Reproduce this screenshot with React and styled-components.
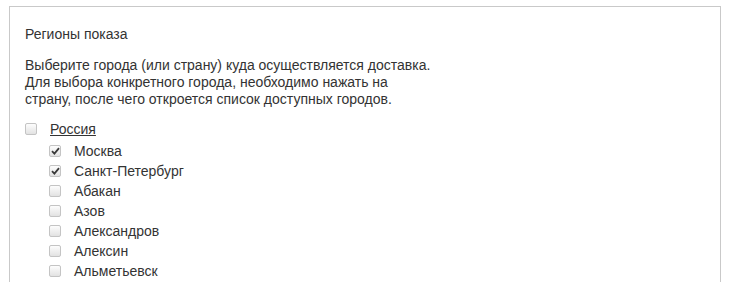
import React, { useState } from 'react';
import styled, { createGlobalStyle } from 'styled-components';

const GlobalStyle = createGlobalStyle`
  html, body {
    margin: 0;
    padding: 0;
    background: #fff;
  }
  body {
    font-family: "Liberation Sans", Arial, sans-serif;
    font-size: 14px;
    color: #333;
  }
`;

const Panel = styled.div`
  margin: 6px 0 0 9px;
  width: 712px;
  height: 290px;
  border: 1px solid #c9c9c9;
  border-bottom: none;
  padding: 19px 0 0 15px;
  box-sizing: border-box;
`;

const Title = styled.div`
  line-height: 17px;
  margin-bottom: 14px;
`;

const Hint = styled.p`
  margin: 0 0 11px;
  line-height: 17px;
`;

const List = styled.ul`
  list-style: none;
  margin: 0;
  padding: 0;
`;

const Row = styled.li`
  display: flex;
  align-items: center;
  height: 20px;
  margin-left: ${(p) => (p.$nested ? '24px' : '0')};
`;

const Children = styled(List)`
  margin-top: 2px;
`;

const Box = styled.span`
  width: 12px;
  height: 12px;
  box-sizing: border-box;
  border: 1px solid #c4c4c4;
  border-radius: 2px;
  background: linear-gradient(#fdfdfd, #e2e2e2);
  display: flex;
  align-items: center;
  justify-content: center;
  flex-shrink: 0;
  cursor: pointer;
`;

const Label = styled.span`
  margin-left: 13px;
  line-height: 17px;
  text-decoration: ${(p) => (p.$link ? 'underline' : 'none')};
  cursor: pointer;
`;

function Check({ checked, onClick }) {
  return (
    <Box onClick={onClick}>
      {checked && (
        <svg width="9" height="8" viewBox="0 0 9 8">
          <path d="M1 4.2 L3.4 6.6 L8 1.2" fill="none" stroke="#3a3a3a" strokeWidth="1.8" />
        </svg>
      )}
    </Box>
  );
}

const cities = [
  'Москва',
  'Санкт-Петербург',
  'Абакан',
  'Азов',
  'Александров',
  'Алексин',
  'Альметьевск',
];

export default function App() {
  const [country, setCountry] = useState(false);
  const [selected, setSelected] = useState(['Москва', 'Санкт-Петербург']);

  const toggle = (city) => {
    setSelected((prev) =>
      prev.includes(city) ? prev.filter((c) => c !== city) : [...prev, city]
    );
  };

  return (
    <>
      <GlobalStyle />
      <Panel>
        <Title>Регионы показа</Title>
        <Hint>
          Выберите города (или страну) куда осуществляется доставка.
          <br />
          Для выбора конкретного города, необходимо нажать на
          <br />
          страну, после чего откроется список доступных городов.
        </Hint>
        <List>
          <Row>
            <Check checked={country} onClick={() => setCountry(!country)} />
            <Label $link>Россия</Label>
          </Row>
          <Children>
            {cities.map((city) => (
              <Row key={city} $nested>
                <Check checked={selected.includes(city)} onClick={() => toggle(city)} />
                <Label>{city}</Label>
              </Row>
            ))}
          </Children>
        </List>
      </Panel>
    </>
  );
}
